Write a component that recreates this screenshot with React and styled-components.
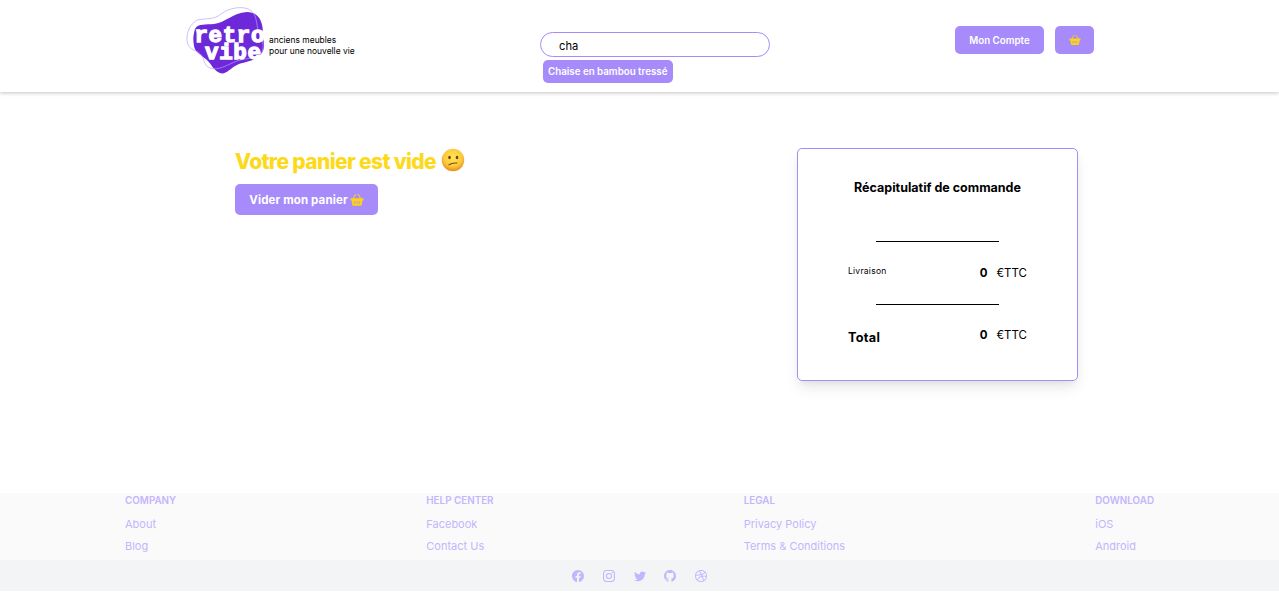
import React from "react";
import styled, { createGlobalStyle } from "styled-components";
import { BsFacebook, BsInstagram, BsTwitter, BsGithub, BsDribbble } from "react-icons/bs";

const GlobalStyle = createGlobalStyle`
  *, *::before, *::after { box-sizing: border-box; }
  body { margin: 0; background: #fff; color: #000; font-family: Inter, "Liberation Sans", sans-serif; }
  h1, h2, h3, p, ul, hr { margin: 0; padding: 0; }
  button, input { font: inherit; }
`;

const Page = styled.div`
  display: flex;
  flex-direction: column;
  min-height: 608px;
`;
const Header = styled.header`
  display: flex;
  align-items: flex-start;
  height: 92px;
  padding: 0 185px;
  box-shadow: 0 1px 4px rgba(0, 0, 0, 0.24);
`;
const Brand = styled.div`
  display: flex;
  width: 355px;
`;
const LogoSvg = styled.svg`
  flex: none;
  width: 84px;
  height: 80px;
`;
const Slogan = styled.p`
  padding-top: 35px;
  font-size: 8.45px;
  line-height: 11px;
  white-space: nowrap;
`;
const Search = styled.div`
  width: 230px;
  padding-top: 32px;
`;
const SearchInput = styled.input`
  display: block;
  width: 230px;
  height: 25px;
  padding: 2px 18px 0;
  border: 1px solid #a78bfa;
  border-radius: 13px;
  outline: none;
  font-size: 11.2px;
`;
const Suggestion = styled.div`
  display: inline-block;
  width: 130px;
  height: 23px;
  margin: 3px 0 0 3px;
  padding: 0 5px;
  border-radius: 5px;
  background: #a78bfa;
  color: #fff;
  font-size: 9.75px;
  font-weight: 600;
  line-height: 23px;
  white-space: nowrap;
`;
const Actions = styled.div`
  display: flex;
  gap: 11px;
  margin-left: auto;
  padding-top: 26px;
`;
const Button = styled.button`
  display: flex;
  align-items: center;
  justify-content: center;
  gap: 2px;
  width: ${(p) => p.$width}px;
  height: ${(p) => p.$height}px;
  padding: 0;
  border: 0;
  border-radius: 5px;
  background: #a78bfa;
  color: #fff;
  font-size: ${(p) => p.$size || 9.75}px;
  font-weight: ${(p) => p.$weight || 600};
  letter-spacing: ${(p) => p.$spacing || 0}px;
  white-space: nowrap;
`;
const Main = styled.main`
  display: flex;
  justify-content: space-between;
  align-items: flex-start;
  height: 401px;
  padding: 56px 201px 0 235px;
`;
const Title = styled.h1`
  display: flex;
  align-items: center;
  gap: 5px;
  height: 26px;
  margin-bottom: 10px;
  color: #fdd91c;
  font-size: 21px;
  font-weight: 800;
  letter-spacing: -0.65px;
  white-space: nowrap;
  svg { margin-top: -2px; }
`;
const Summary = styled.section`
  width: 281px;
  height: 233px;
  padding: 30px 50px 0;
  border: 1px solid #a78bfa;
  border-radius: 5px;
  box-shadow: 0 8px 14px -2px rgba(0, 0, 0, 0.1), 0 3px 6px -2px rgba(0, 0, 0, 0.05);
`;
const SummaryTitle = styled.h2`
  margin: 0 -10px 45px;
  font-size: 12.5px;
  font-weight: 700;
  line-height: 17px;
  text-align: center;
  white-space: nowrap;
`;
const Rule = styled.hr`
  width: 123px;
  height: 1px;
  margin: 0 auto;
  border: 0;
  background: #000;
`;
const Line = styled.div`
  display: flex;
  justify-content: space-between;
  height: 62px;
  padding-top: ${(p) => p.$top}px;
`;
const Label = styled.span`
  padding-top: ${(p) => (p.$strong ? 3 : 0)}px;
  font-size: ${(p) => (p.$strong ? 12.7 : 8.5)}px;
  font-weight: ${(p) => (p.$strong ? 700 : 400)};
  letter-spacing: ${(p) => (p.$strong ? 0.3 : 0.25)}px;
  line-height: ${(p) => (p.$strong ? 16 : 12)}px;
`;
const Amount = styled.span`
  display: flex;
  gap: 9px;
  font-size: 11.5px;
  line-height: 17px;
  b { font-weight: 700; }
`;
const Footer = styled.footer`
  color: #c4b5fd;
`;
const Links = styled.div`
  display: flex;
  justify-content: space-between;
  height: 67px;
  padding: 0 125px;
  background: #fafafa;
`;
const LinkColumn = styled.div`
  font-size: 11px;
  line-height: 22px;
  white-space: nowrap;
`;
const ColumnTitle = styled.h3`
  margin-bottom: 5px;
  font-size: 9.85px;
  font-weight: 600;
  line-height: 15px;
`;
const Social = styled.div`
  display: flex;
  align-items: center;
  justify-content: center;
  gap: 18.8px;
  height: 31px;
  background: #f3f4f6;
`;

function Logo() {
  return (
    <LogoSvg viewBox="185 0 84 80">
      <path
        d="M195 29C198 23 206 25 214 24C227 22 232 13 247 12C258 12 263 20 263 34C263 43 267 49 259 56C253 62 243 62 237 65C229 69 226 75 220 73C214 71 212 65 207 60C200 54 195 52 194 46C193 40 193 36 195 29Z"
        fill="#6d28d9"
      />
      <path
        d="M187 39C187 30 191 24 197 20C207 18 214 20 221 14C229 8 241 6 248 9C255 12 256 18 257 25C258 35 264 39 263 48C262 60 248 57 237 61C227 65 218 71 210 68C202 65 206 57 198 52C191 49 187 47 187 39Z"
        fill="none"
        stroke="#b9a0f3"
        strokeWidth="0.8"
        strokeOpacity="0.85"
      />
      <g fill="#fff" stroke="#fff" strokeWidth="1.3" fontFamily="Liberation Mono, monospace" fontWeight="700" fontSize="22.500">
        <text x="194.500" y="41.500" textLength="70">retro</text>
        <text x="205" y="58.500" textLength="56">vibe</text>
      </g>
    </LogoSvg>
  );
}

function Basket({ size }) {
  return (
    <svg width={size} height={size} viewBox="0 0 24 24" fill="none">
      <path d="M6 10Q7 5 10 2.500M18 10Q17 5 14 2.500" stroke="#fcd31b" strokeWidth="1.800" strokeLinecap="round" />
      <path d="M1 9h22v3.500h-1.500L20 20q-.4 2-2.500 2h-11q-2 0-2.500-2L2.500 12.500H1Z" fill="#fcd31b" />
      <path d="M8 14v4.500M12 14v4.500M16 14v4.500" stroke="#a78bfa" strokeWidth="1.300" />
    </svg>
  );
}

function ConfusedFace() {
  return (
    <svg width="24" height="24" viewBox="0 0 24 24">
      <defs>
        <radialGradient id="face" cx="50%" cy="38%" r="62%">
          <stop offset="0" stopColor="#ffe65c" />
          <stop offset="0.65" stopColor="#fcc93b" />
          <stop offset="1" stopColor="#e98b1c" />
        </radialGradient>
      </defs>
      <circle cx="12" cy="12" r="11.200" fill="url(#face)" />
      <ellipse cx="8.500" cy="9.500" rx="1.300" ry="1.800" fill="#6b4310" />
      <ellipse cx="16" cy="9.500" rx="1.300" ry="1.800" fill="#6b4310" />
      <path d="M8 16.800Q11 14.600 16 15" stroke="#7a4a14" strokeWidth="1.100" fill="none" strokeLinecap="round" />
    </svg>
  );
}

const columns = [
  ["COMPANY", "About", "Blog"],
  ["HELP CENTER", "Facebook", "Contact Us"],
  ["LEGAL", "Privacy Policy", "Terms & Conditions"],
  ["DOWNLOAD", "iOS", "Android"],
];
const networks = [BsFacebook, BsInstagram, BsTwitter, BsGithub, BsDribbble];

export default function App() {
  return (
    <Page>
      <GlobalStyle />
      <Header>
        <Brand>
          <Logo />
          <Slogan>anciens meubles<br />pour une nouvelle vie</Slogan>
        </Brand>
        <Search>
          <SearchInput defaultValue="cha" />
          <Suggestion>Chaise en bambou tressé</Suggestion>
        </Search>
        <Actions>
          <Button $width={89} $height={28}>Mon Compte</Button>
          <Button $width={39} $height={28}><Basket size={12} /></Button>
        </Actions>
      </Header>
      <Main>
        <div>
          <Title>Votre panier est vide <ConfusedFace /></Title>
          <Button $width={143} $height={31} $size={11.5} $weight={700} $spacing={0.12}>Vider mon panier <Basket size={14} /></Button>
        </div>
        <Summary>
          <SummaryTitle>Récapitulatif de commande</SummaryTitle>
          <Rule />
          <Line $top={23}>
            <Label>Livraison</Label>
            <Amount><b>0</b>€TTC</Amount>
          </Line>
          <Rule />
          <Line $top={22}>
            <Label $strong>Total</Label>
            <Amount><b>0</b>€TTC</Amount>
          </Line>
        </Summary>
      </Main>
      <Footer>
        <Links>
          {columns.map(([title, ...links]) => (
            <LinkColumn key={title}>
              <ColumnTitle>{title}</ColumnTitle>
              {links.map((link) => <p key={link}>{link}</p>)}
            </LinkColumn>
          ))}
        </Links>
        <Social>
          {networks.map((Icon, i) => <Icon key={i} size={12} />)}
        </Social>
      </Footer>
    </Page>
  );
}
